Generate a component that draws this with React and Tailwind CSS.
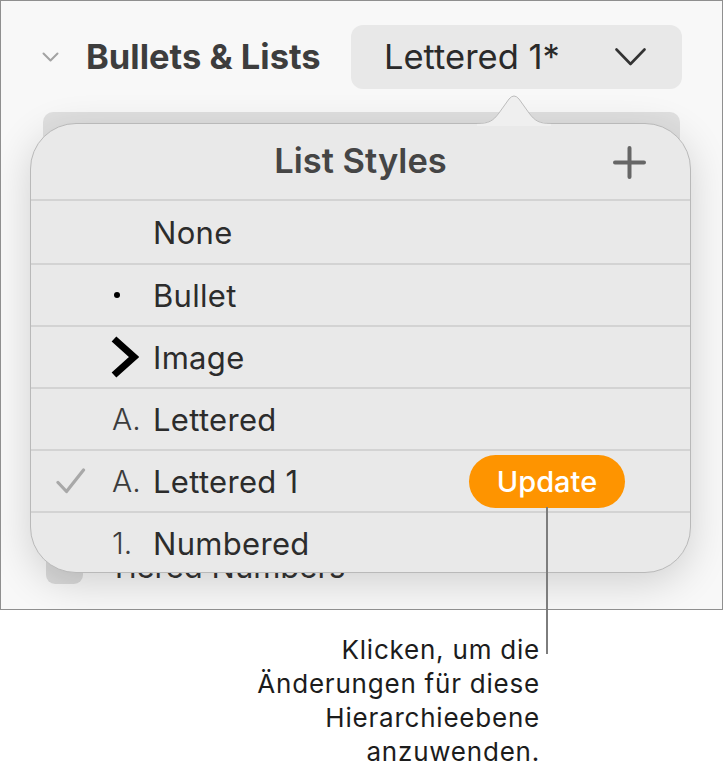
import React from "react";

function Row({ check, marker, label, update, first }) {
  return (
    <div className={`flex items-center border-t-2 border-[#d3d3d3] ${first ? "h-[64px]" : "h-[62px]"} relative`}>
      <div className="w-[81px] pl-[25px] flex items-center">
        {check && (
          <svg width="30" height="26" viewBox="0 0 30 26" fill="none">
            <path d="M2 14.5 L10.5 23.5 L27.5 2" stroke="#a8a8a8" strokeWidth="3.2" strokeLinecap="round" strokeLinejoin="round" />
          </svg>
        )}
      </div>
      <div className="w-[41px] flex items-center">{marker}</div>
      <div className="text-[31px] tracking-[0.01em] text-[#2c2c2c] leading-none">{label}</div>
      {update && (
        <div className="ml-auto mr-[65px] w-[156px] h-[53px] rounded-full bg-[#fe9400] flex items-center justify-center text-white text-[29px] font-medium leading-none">
          Update
        </div>
      )}
    </div>
  );
}

export default function App() {
  return (
    <div className="relative w-[724px] h-[782px] bg-white font-['Inter',sans-serif] overflow-hidden">
      <div className="relative w-[723px] h-[610px] border border-[#8f8f8f] bg-[#f8f8f8] overflow-hidden">
        {/* header row */}
        <div className="flex items-center h-[64px] mt-[24px] pl-[41px]">
          <div className="w-[44px] flex items-center">
            <svg width="17" height="10" viewBox="0 0 17 10" fill="none">
              <path d="M1.5 1.5 L8.5 8.5 L15.5 1.5" stroke="#a3a3a3" strokeWidth="2" strokeLinecap="round" strokeLinejoin="round" />
            </svg>
          </div>
          <div className="w-[265px] text-[34.5px] font-bold text-[#3d3d3d] leading-none">Bullets &amp; Lists</div>
          <div className="w-[331px] h-[64px] rounded-[12px] bg-[#e8e8e8] flex items-center justify-between pl-[33px] pr-[36px]">
            <span className="text-[34.5px] text-[#2a2a2a] leading-none">Lettered 1*</span>
            <svg width="31" height="18" viewBox="0 0 31 18" fill="none">
              <path d="M1.5 1.5 L15.5 16 L29.5 1.5" stroke="#333333" strokeWidth="2.6" strokeLinecap="round" strokeLinejoin="round" />
            </svg>
          </div>
        </div>
        {/* content under the popover */}
        <div className="ml-[42px] mt-[23px] w-[637px] h-[110px] rounded-[10px] bg-[#e0e0e0]" />
        <div className="flex items-end mt-[326px] ml-[45px]">
          <div className="w-[37px] h-[36px] rounded-[9px] bg-[#dadada]" />
          <div className="ml-[26px] h-[12px] overflow-hidden">
            <div className="-mt-[21px] text-[31px] text-[#333] leading-none whitespace-nowrap">Tiered Numbers</div>
          </div>
        </div>

        {/* popover */}
        <div className="absolute left-[29px] top-[122px] w-[661px] h-[450px]">
          <svg className="absolute left-[447px] top-[-29px]" width="74" height="32" viewBox="0 0 74 32" fill="none">
            <path d="M0 29 C12 29 16 27 22 19 L32 5 Q37 -1 42 5 L52 19 C58 27 62 29 74 29 L74 32 L0 32 Z" fill="#efefef" />
            <path d="M0 29.5 C12 29.5 16 27 22 19 L32 5 Q37 -1 42 5 L52 19 C58 27 62 29.5 74 29.5" stroke="#bdbdbd" strokeWidth="1" fill="none" />
          </svg>
          <div className="w-full h-full rounded-[46px] border border-[#b9b9b9] bg-[#e9e9e9] overflow-hidden shadow-[0_10px_40px_rgba(0,0,0,0.16)]">
            <div className="relative h-[75px] flex items-center justify-center">
              <span className="text-[34.5px] font-semibold text-[#454545] leading-none">List Styles</span>
              <svg className="absolute right-[44px] top-[22px]" width="33" height="33" viewBox="0 0 33 33" fill="none">
                <path d="M16.5 2 V31 M2 16.5 H31" stroke="#666666" strokeWidth="4" strokeLinecap="round" />
              </svg>
            </div>
            <Row first label="None" />
            <Row
              label="Bullet"
              marker={<div className="ml-[2px] w-[6px] h-[6px] rounded-full bg-black" />}
            />
            <Row
              label="Image"
              marker={
                <svg width="28" height="42" viewBox="0 0 28 42" fill="none" className="-ml-[1px]">
                  <path d="M3 3 L23 21 L3 39" stroke="#000" strokeWidth="7" strokeLinejoin="miter" />
                </svg>
              }
            />
            <Row label="Lettered" marker={<span className="text-[30px] font-light text-[#3c3c3c] leading-none">A.</span>} />
            <Row check update label="Lettered 1" marker={<span className="text-[30px] font-light text-[#3c3c3c] leading-none">A.</span>} />
            <Row label="Numbered" marker={<span className="text-[30px] font-light text-[#3c3c3c] leading-none">1.</span>} />
          </div>
        </div>
      </div>

      {/* callout */}
      <div className="absolute left-[546px] top-[507px] w-[2px] h-[147px] bg-[#7d7d7d]" />
      <div className="w-[540px] mt-[23px] text-right text-[26px] tracking-[0.03em] leading-[34px] text-[#1c1c1c]">
        Klicken, um die
        <br />
        Änderungen für diese
        <br />
        Hierarchieebene
        <br />
        anzuwenden.
      </div>
    </div>
  );
}
